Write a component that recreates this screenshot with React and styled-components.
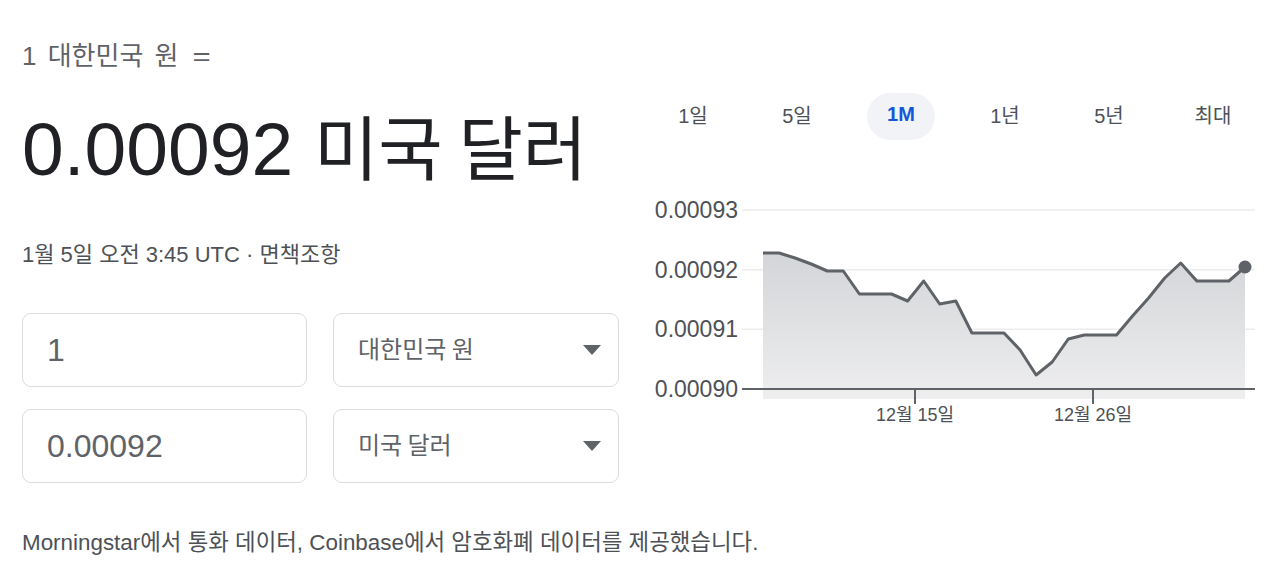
import React from 'react';
import styled, { createGlobalStyle } from 'styled-components';

const GlobalStyle = createGlobalStyle`
  html, body {
    margin: 0;
    padding: 0;
    background: #ffffff;
  }
  body {
    font-family: "Liberation Sans", "Noto Sans CJK KR", sans-serif;
    color: #202124;
  }
`;

const Page = styled.div`
  display: flex;
  align-items: flex-start;
  padding: 40px 0 0 22px;
  width: 1280px;
  height: 582px;
  box-sizing: border-box;
  overflow: hidden;
`;

const LeftColumn = styled.div`
  width: 598px;
  display: flex;
  flex-direction: column;
`;

const RightColumn = styled.div`
  width: 624px;
  margin-left: 21px;
  display: flex;
  flex-direction: column;
`;

const FromLabel = styled.div`
  font-size: 26px;
  line-height: 32px;
  color: #5f6368;
  word-spacing: 4px;
`;

const Equals = styled.span`
  display: inline-block;
  margin-left: 15px;
  transform: scaleX(1.2);
`;

const BigValue = styled.div`
  margin-top: 37px;
  font-size: 75px;
  line-height: 80px;
  height: 80px;
  color: #202124;
  white-space: nowrap;
`;

const Unit = styled.span`
  font-family: "Noto Sans CJK KR", sans-serif;
  font-size: 70px;
  line-height: 1;
`;

const Updated = styled.div`
  margin-top: 52px;
  font-size: 22px;
  line-height: 28px;
  color: #4d5156;
`;

const Converter = styled.div`
  margin-top: 44px;
  display: grid;
  grid-template-columns: 285px 286px;
  grid-auto-rows: 74px;
  column-gap: 26px;
  row-gap: 22px;
`;

const Field = styled.div`
  box-sizing: border-box;
  border: 1px solid #dadce0;
  border-radius: 9px;
  display: flex;
  align-items: center;
  justify-content: space-between;
  padding: ${(p) => (p.$select ? '0 17px 0 24px' : '0 0 0 24px')};
`;

const AmountText = styled.span`
  font-size: 32px;
  color: #5f6368;
`;

const CurrencyText = styled.span`
  font-family: "Noto Sans CJK KR", sans-serif;
  font-size: 24px;
  color: #5f6368;
  margin-top: -5px;
`;

const Caret = styled.span`
  width: 0;
  height: 0;
  border-left: 9.5px solid transparent;
  border-right: 9.5px solid transparent;
  border-top: 10px solid #5f6368;
`;

const Footer = styled.div`
  margin-top: 46px;
  font-size: 22.4px;
  line-height: 28px;
  color: #4d5156;
  white-space: nowrap;
`;

const RangeTabs = styled.div`
  margin-top: 53px;
  display: flex;
  height: 47px;
`;

const Tab = styled.div`
  width: 104px;
  display: flex;
  justify-content: center;
`;

const TabPill = styled.span`
  display: flex;
  align-items: center;
  justify-content: center;
  box-sizing: border-box;
  min-width: 68px;
  height: 47px;
  padding-bottom: 4px;
  border-radius: 24px;
  font-size: 20px;
  font-weight: ${(p) => (p.$active ? 600 : 400)};
  color: ${(p) => (p.$active ? '#1558d6' : '#4d5156')};
  background: ${(p) => (p.$active ? '#f1f3f6' : 'transparent')};
`;

const ChartSvg = styled.svg`
  display: block;
  margin-top: 50px;
  font-family: "Liberation Sans", "Noto Sans CJK KR", sans-serif;
`;

const tabs = ['1일', '5일', '1M', '1년', '5년', '최대'];

const values = [
  253, 253, 258, 264, 271, 271, 294, 294, 294, 301, 281, 304, 301, 333, 333, 333,
  350, 375, 362, 339, 335, 335, 335, 316, 298, 278, 263, 281, 281, 281, 267,
];

const grid = [
  { y: 210, label: '0.00093' },
  { y: 269.7, label: '0.00092' },
  { y: 329.3, label: '0.00091' },
];

function RateChart() {
  const x0 = 763;
  const step = (1245 - 763) / (values.length - 1);
  const pts = values.map((y, i) => [x0 + i * step, y]);
  const line = pts.map((p, i) => `${i ? 'L' : 'M'}${p[0].toFixed(1)},${p[1]}`).join(' ');
  const area = `${line} L1245,399 L763,399 Z`;
  const last = pts[pts.length - 1];

  return (
    <ChartSvg width="624" height="240" viewBox="641 190 624 240">
      <defs>
        <linearGradient id="areaFill" x1="0" y1="0" x2="0" y2="1">
          <stop offset="0" stopColor="#d3d5d8" />
          <stop offset="1" stopColor="#eeeeef" />
        </linearGradient>
      </defs>
      {grid.map((g) => (
        <line key={g.label} x1="742" x2="1255" y1={g.y} y2={g.y} stroke="#ececec" strokeWidth="1.5" />
      ))}
      <path d={area} fill="url(#areaFill)" />
      <path d={line} fill="none" stroke="#5f6368" strokeWidth="3" strokeLinejoin="round" />
      <circle cx={last[0]} cy={last[1]} r="6.5" fill="#5f6368" />
      <line x1="742" x2="1255" y1="389" y2="389" stroke="#5f6368" strokeWidth="2" />
      <line x1="915" x2="915" y1="389" y2="404" stroke="#5f6368" strokeWidth="2" />
      <line x1="1093" x2="1093" y1="389" y2="404" stroke="#5f6368" strokeWidth="2" />
      {grid.concat({ y: 389, label: '0.00090' }).map((g) => (
        <text key={g.label} x="738" y={g.y + 8} textAnchor="end" fontSize="23" fill="#4d5156">
          {g.label}
        </text>
      ))}
      <text x="915" y="421" textAnchor="middle" fontSize="18" fill="#4d5156">12월 15일</text>
      <text x="1093" y="421" textAnchor="middle" fontSize="18" fill="#4d5156">12월 26일</text>
    </ChartSvg>
  );
}

export default function App() {
  return (
    <>
      <GlobalStyle />
      <Page>
        <LeftColumn>
          <FromLabel>
            1 대한민국 원<Equals>=</Equals>
          </FromLabel>
          <BigValue>
            0.00092 <Unit>미국 달러</Unit>
          </BigValue>
          <Updated>1월 5일 오전 3:45 UTC · 면책조항</Updated>
          <Converter>
            <Field>
              <AmountText>1</AmountText>
            </Field>
            <Field $select>
              <CurrencyText>대한민국 원</CurrencyText>
              <Caret />
            </Field>
            <Field>
              <AmountText>0.00092</AmountText>
            </Field>
            <Field $select>
              <CurrencyText>미국 달러</CurrencyText>
              <Caret />
            </Field>
          </Converter>
          <Footer>Morningstar에서 통화 데이터, Coinbase에서 암호화폐 데이터를 제공했습니다.</Footer>
        </LeftColumn>
        <RightColumn>
          <RangeTabs>
            {tabs.map((t) => (
              <Tab key={t}>
                <TabPill $active={t === '1M'}>{t}</TabPill>
              </Tab>
            ))}
          </RangeTabs>
          <RateChart />
        </RightColumn>
      </Page>
    </>
  );
}
